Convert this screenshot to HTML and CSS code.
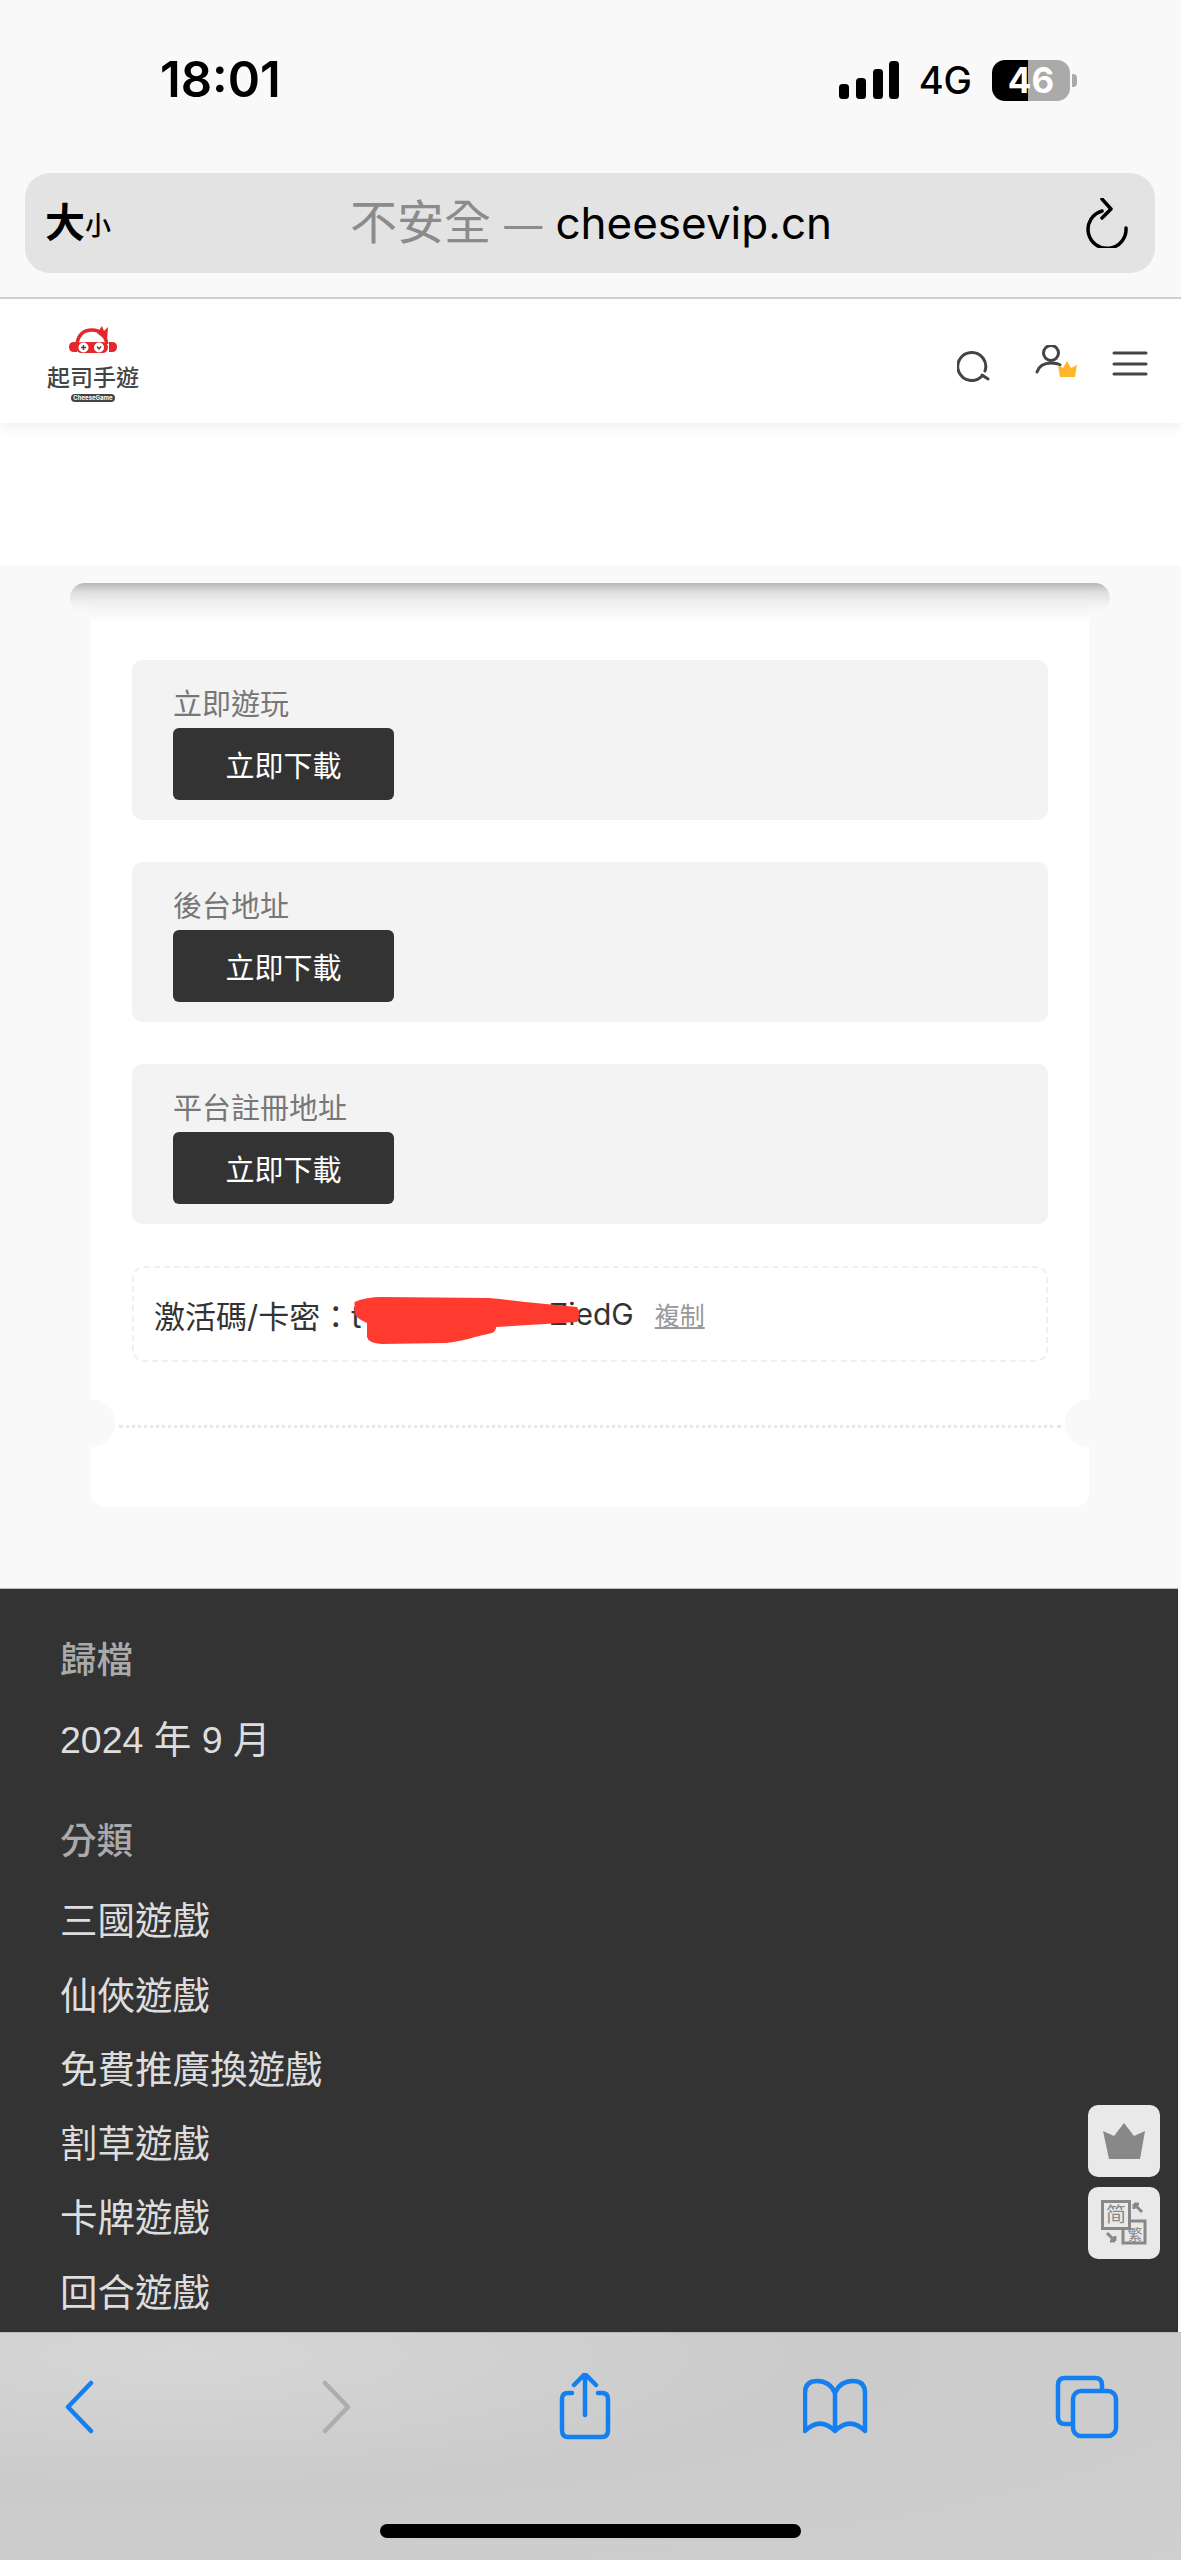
FILE: index.html
```html
<!DOCTYPE html>
<html lang="zh-Hant">
<head>
<meta charset="utf-8">
<title>起司手遊</title>
<link rel="stylesheet" href="styles.css">
</head>
<body>
<div class="chrome">
  <div class="status">
    <span class="time">18:01</span>
    <svg class="signal" width="60" height="38" viewBox="838 60 60 38"><rect x="838" y="83" width="10" height="15" rx="3.5"/><rect x="855" y="77" width="10" height="21" rx="3.5"/><rect x="872" y="68" width="10" height="30" rx="3.5"/><rect x="888" y="60" width="10" height="38" rx="3.5"/></svg>
    <span class="net">4G</span>
    <span class="battery">46</span>
    <span class="nub"></span>
  </div>
  <div class="urlbar">
    <span class="aa"><b>大</b><small>小</small></span>
    <span class="addr"><span class="insecure">不安全 <span class="dash">—</span> </span>cheesevip.cn</span>
    <svg class="reload" width="44" height="50" viewBox="1085 196 44 50"><path d="M1102 209A19 19 0 1 0 1126 226"/><path d="M1102 197l9 10-9 9"/></svg>
  </div>
</div>

<main class="view">
  <header class="site-head">
    <div class="logo">
      <svg class="logo-mark" width="48" height="28" viewBox="69 326 48 28">
        <path class="r" d="M69 347q0-5 5-5h3v10h-3q-5 0-5-5zM117 347q0-5-5-5h-3v10h3q5 0 5-5z"/>
        <path class="rl" d="M77 344q2-14 15-14 12 0 15 14"/>
        <path class="r" d="M97 333l5-7 2 5 4-4-1 14z"/>
        <rect class="r" x="76" y="342" width="32" height="11" rx="5.5"/>
        <circle class="w" cx="83.5" cy="347.5" r="5"/><circle class="w" cx="99" cy="347.5" r="5"/>
        <path class="d" d="M81 347.5h5M83.5 345v5M97 346.5l2 2.500 2-2.500"/>
      </svg>
      <span class="logo-name">起司手遊</span>
      <span class="logo-pill">CheeseGame</span>
    </div>
    <div class="head-icons">
      <svg width="34" height="34" viewBox="957 348 34 34"><path class="ic" d="M982 376A14 14 0 1 1 985 371M982 375l6 4"/></svg>
      <svg class="user-ic" width="46" height="34" viewBox="1035 345 46 34"><circle class="ic" cx="1051" cy="353" r="7.5"/><path class="ic" d="M1037 372q3-9 14-9 6 0 9 2"/><path class="gold" d="M1058 365l5 3 4-7 4 7 6-3-2 12h-15z"/></svg>
      <svg class="menu-ic" width="36" height="26" viewBox="1112 351 36 26"><path class="ic" d="M1114 353h32M1114 364h32M1114 374h32"/></svg>
    </div>
  </header>
  <div class="hero"></div>

  <section class="content">
    <div class="slot"></div>
    <div class="card">
      <div class="dl-list">
        <div class="dl-box"><div class="dl-label">立即遊玩</div><a class="dl-btn">立即下載</a></div>
        <div class="dl-box"><div class="dl-label">後台地址</div><a class="dl-btn">立即下載</a></div>
        <div class="dl-box"><div class="dl-label">平台註冊地址</div><a class="dl-btn">立即下載</a></div>
        <div class="code-box">
          <span>激活碼/卡密：t</span><span class="masked"></span><span>ZiedG</span><a class="copy">複制</a>
          <svg class="scribble" width="228" height="50" viewBox="354 1297 228 50"><path d="M354.500 1302Q366 1297 382 1297L489 1298Q510 1300 525 1302L577 1307Q582 1314 577 1322L496 1327Q496 1331 492 1333L475 1337Q462 1341 446 1343L382 1344Q368 1343 367 1337L367 1323Q355 1318 354.500 1312Z"/></svg>
        </div>
      </div>
      <div class="tear"></div>
      <span class="notch notch-l"></span>
      <span class="notch notch-r"></span>
    </div>
  </section>

  <footer class="foot">
    <h3 class="foot-h">歸檔</h3>
    <ul class="foot-list">
      <li>2024 年 9 月</li>
    </ul>
    <h3 class="foot-h foot-h2">分類</h3>
    <ul class="foot-list">
      <li>三國遊戲</li>
      <li>仙俠遊戲</li>
      <li>免費推廣換遊戲</li>
      <li>割草遊戲</li>
      <li>卡牌遊戲</li>
      <li>回合遊戲</li>
    </ul>
  </footer>
</main>

<div class="toolbar">
  <svg class="tb" width="30" height="70" viewBox="64 2372 30 70"><path class="blue" d="M91 2382l-23 24 23 24"/></svg>
  <svg class="tb tb-fwd" width="30" height="70" viewBox="323 2372 30 70"><path class="grey" d="M325 2382l23 24-23 24"/></svg>
  <svg class="tb tb-share" width="54" height="70" viewBox="558 2372 54 70"><path class="blue" d="M572 2392h-4q-6 0-6 6v31q0 7 6 7h34q6 0 6-7v-31q0-6-6-6h-4M585 2414v-40M574 2384l11-11 11 11"/></svg>
  <svg class="tb tb-book" width="66" height="70" viewBox="803 2372 66 70"><path class="blue" d="M835 2392q-5-12-18-12-12 0-12 12v38q15-15 30 0 15-15 30 0v-38q0-12-12-12-13 0-18 12zM835 2392v38"/></svg>
  <svg class="tb tb-tabs" width="64" height="70" viewBox="1055 2372 64 70"><path class="blue" d="M1070 2423h-5q-7 0-7-7v-32q0-7 7-7h30q7 0 7 7v5"/><rect class="blue" x="1073" y="2390" width="43" height="45" rx="8"/></svg>
</div>
<div class="home-wrap"><span class="home"></span></div>

<div class="float-btns">
  <button class="float-btn"><svg width="42" height="36" viewBox="0 0 42 36"><path d="M0 8l11 5L21 0l10 13 11-5-5 28H6z"/></svg></button>
  <button class="float-btn"><svg class="lang-ic" width="46" height="46" viewBox="0 0 46 46">
    <rect class="lang-box" x="22" y="21" width="22" height="22"/>
    <rect class="lang-box lang-front" x="1.500" y="1.500" width="27" height="27"/>
    <text class="lang-t" x="15" y="22" font-size="20">简</text>
    <text class="lang-t" x="34" y="40" font-size="15">繁</text>
    <path class="lang-arrow" d="M33 4l8 8M33 4v5M33 4h5M6 33l8 8M14 41v-5M14 41H9"/>
  </svg></button>
</div>
```

FILE: styles.css
```css
* { box-sizing: border-box; }
html, body { margin: 0; padding: 0; }
body {
  position: relative;
  width: 1181px;
  height: 2560px;
  overflow: hidden;
  display: flex;
  flex-direction: column;
  background: #f9f9f9;
  font-family: "Inter", "Noto Sans CJK TC", sans-serif;
  color: #333;
}

/* browser chrome, top */
.chrome {
  height: 299px;
  flex: none;
  padding: 60px 25px 0;
  background: #f9f9f9;
  border-bottom: 2px solid #cfcfcf;
}
.status { display: flex; align-items: center; height: 40px; }
.time { margin-left: 135px; font-size: 49px; font-weight: 600; color: #000; line-height: 40px; }
.signal { margin-left: auto; }
.signal rect { fill: #000; }
.net { margin-left: 20px; font-size: 38px; font-weight: 500; color: #000; line-height: 40px; }
.battery {
  margin-left: 20px;
  width: 78px;
  height: 41px;
  border-radius: 13px;
  background: linear-gradient(90deg, #000 46%, #aaa 46%);
  color: #fff;
  font-size: 35px;
  font-weight: 700;
  line-height: 41px;
  text-align: center;
}
.nub { margin-left: 2px; margin-right: 79px; width: 5px; height: 13px; border-radius: 0 4px 4px 0; background: #aaa; }

.urlbar {
  margin-top: 73px;
  width: 1130px;
  height: 100px;
  border-radius: 25px;
  background: #e3e3e3;
  display: flex;
  align-items: center;
  padding: 0 26px 0 20px;
  color: #000;
}
.aa { width: 66px; display: flex; align-items: flex-end; line-height: 44px; }
.aa b { font-size: 40px; font-weight: 700; }
.aa small { font-size: 26px; font-weight: 500; line-height: 38px; }
.addr { flex: 1; text-align: center; font-size: 44px; line-height: 60px; padding-right: 14px; }
.insecure { color: #8b8b8b; font-size: 47px; }
.dash { font-size: 38px; }
.reload path { fill: none; stroke: #000; stroke-width: 3.5; stroke-linecap: round; stroke-linejoin: round; }

/* page viewport */
.view { flex: 1; min-height: 0; overflow: hidden; display: flex; flex-direction: column; }
.site-head {
  position: relative;
  flex: none;
  height: 124px;
  background: #fff;
  box-shadow: 0 4px 14px rgba(0, 0, 0, 0.07);
  display: flex;
  align-items: flex-start;
  justify-content: space-between;
  padding: 27px 33px 0 47px;
}
.logo { width: 92px; display: flex; flex-direction: column; align-items: center; }
.logo-mark { display: block; }
.logo-mark .r { fill: #e2272d; }
.logo-mark .rl { fill: none; stroke: #e2272d; stroke-width: 3.5; }
.logo-mark .w { fill: #fff; }
.logo-mark .d { fill: none; stroke: #444; stroke-width: 1.4; }
.logo-name { margin-top: 12px; font-size: 23px; line-height: 25px; font-weight: 500; color: #444; white-space: nowrap; }
.logo-pill { margin-top: 3px; width: 44px; height: 8px; border-radius: 4px; background: #444; color: #fff; font-size: 6px; line-height: 8px; font-weight: 700; text-align: center; white-space: nowrap; }
.head-icons { display: flex; align-items: flex-start; margin-top: 22px; }
.user-ic { margin-left: 44px; margin-top: -3px; }
.menu-ic { margin-left: 31px; margin-top: 3px; }
.ic { fill: none; stroke: #444; stroke-width: 3; stroke-linecap: round; }
.gold { fill: #fdb72b; }
.hero { flex: none; height: 143px; background: #fff; }

/* ticket card */
.content { flex: none; height: 1022px; padding-top: 17px; background: #f9f9f9; }
.slot {
  margin: 0 71px 0 70px;
  height: 30px;
  border-radius: 15px;
  background: linear-gradient(#b8b8b8, #dedede 30%, #f2f2f2 70%, #f9f9f9);
}
.card {
  position: relative;
  margin: -14px 92px 0 91px;
  height: 908px;
  padding: 61px 41px 0;
  background: linear-gradient(#ededed, #fff 24px);
  border-radius: 0 0 14px 14px;
}
.dl-list { display: flex; flex-direction: column; gap: 42px; }
.dl-box { height: 160px; padding: 27px 41px 0; border-radius: 10px; background: #f3f3f3; }
.dl-label { font-size: 29px; line-height: 36px; color: #777; margin-bottom: 5px; font-weight: 400; }
.dl-btn {
  display: flex;
  align-items: center;
  justify-content: center;
  width: 221px;
  height: 72px;
  border-radius: 6px;
  background: #333;
  color: #fff;
  font-size: 29px;
}
.code-box {
  position: relative;
  height: 96px;
  padding: 0 0 0 20px;
  border: 2px dashed #f0f0f0;
  border-radius: 12px;
  display: flex;
  align-items: center;
  font-size: 30px;
  color: #333;
  white-space: nowrap;
}
.code-box > span:first-child { font-size: 31px; }
.masked { width: 188px; flex: none; }
.copy { margin-left: 21px; font-size: 25px; color: #999; text-decoration: underline; }
.scribble { position: absolute; left: 220px; top: 29px; }
.scribble path { fill: #ff3b30; }
.tear { position: absolute; left: 28px; right: 28px; top: 826px; border-top: 3px dotted #e8e8e8; }
.notch { position: absolute; top: 800px; width: 48px; height: 48px; border-radius: 50%; background: #f9f9f9; }
.notch-l { left: -24px; }
.notch-r { right: -24px; }

/* dark footer */
.foot {
  flex: 1;
  margin-right: 3px;
  padding: 47px 0 0 60px;
  background: #333;
  border-top: 1px solid #bbb;
  overflow: hidden;
  font-family: "Liberation Sans", "Noto Sans CJK TC", sans-serif;
}
.foot-h { margin: 0 0 17px; font-size: 36.5px; font-weight: 500; line-height: 50px; color: #aaa; }
.foot-h2 { margin-top: 40px; }
.foot-list { margin: 0; padding: 0; list-style: none; }
.foot-list li { height: 74.3px; line-height: 74px; font-size: 37.5px; color: #ddd; white-space: nowrap; }

/* browser chrome, bottom */
.toolbar {
  position: relative;
  flex: none;
  height: 228px;
  display: flex;
  align-items: flex-start;
  padding: 40px 0 0 64px;
  border-top: 1px solid #b9b9b9;
  background: radial-gradient(ellipse at 15% 10%, #d6d6d6, #cbcbcb 45%, #cfcfcf);
}
.tb { display: block; flex: none; }
.tb-fwd { margin-left: 229px; }
.tb-share { margin-left: 205px; }
.tb-book { margin-left: 191px; }
.tb-tabs { margin-left: 186px; }
.blue, .grey { fill: none; stroke-width: 4.5; stroke-linecap: round; stroke-linejoin: round; }
.blue { stroke: #147ff0; }
.grey { stroke: #adadad; }
.home-wrap { position: absolute; left: 0; right: 0; top: 2524px; display: flex; justify-content: center; }
.home { width: 421px; height: 14px; border-radius: 7px; background: #000; }

/* floating side buttons */
.float-btns { position: absolute; left: 1088px; top: 2105px; display: flex; flex-direction: column; gap: 10px; }
.float-btn {
  width: 72px;
  height: 72px;
  padding: 0;
  border: 0;
  border-radius: 10px;
  background: #e9e9e9;
  display: flex;
  align-items: center;
  justify-content: center;
}
.float-btn > svg { fill: #888; display: block; }
.lang-ic { overflow: visible; }
.lang-box { fill: none; stroke: #888; stroke-width: 3; }
.lang-box.lang-front { fill: #e9e9e9; }
.lang-t { fill: #888; text-anchor: middle; font-family: "Noto Sans CJK SC", sans-serif; }
.float-btn .lang-arrow { fill: none; stroke: #888; stroke-width: 3; }
```
